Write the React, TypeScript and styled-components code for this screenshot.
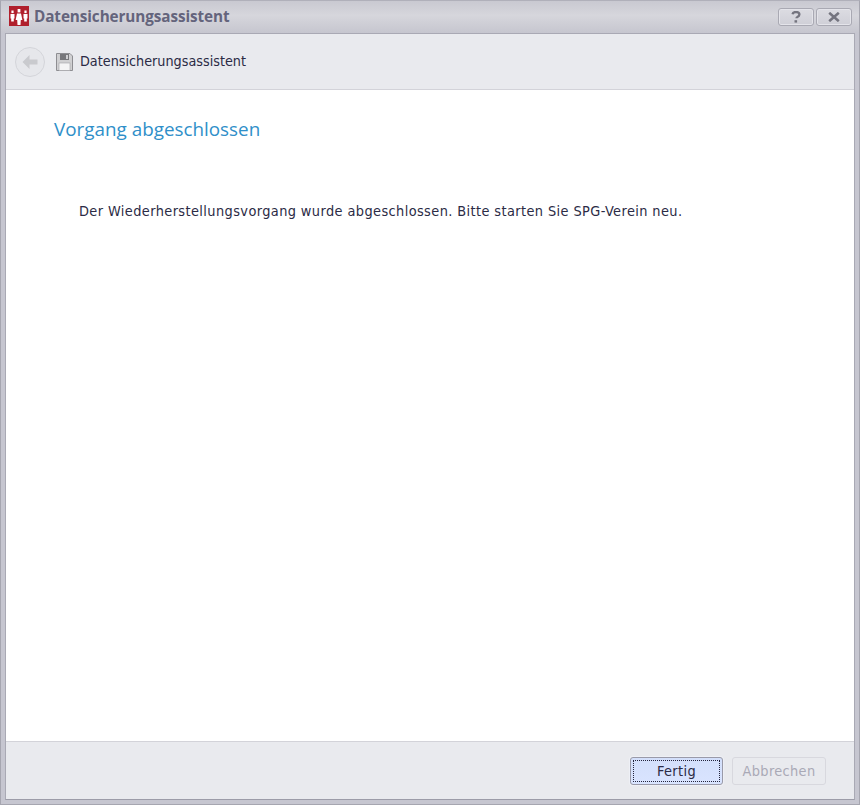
import React from "react";
import styled, { createGlobalStyle } from "styled-components";

const Global = createGlobalStyle`
  html, body { margin: 0; padding: 0; background: #bfbfca; }
  #root { width: 860px; height: 805px; }
  * { box-sizing: border-box; }
`;

const Window = styled.div`
  width: 860px;
  height: 805px;
  display: flex;
  flex-direction: column;
  background: #c6c6d0;
  border: 1px solid #a6a6b0;
  border-top-color: #b0b0ba;
  font-family: "DejaVu Sans", sans-serif;
  font-stretch: condensed;
`;

const TitleBar = styled.div`
  height: 32px;
  flex: none;
  display: flex;
  align-items: center;
  padding: 0 5px 2px 8px;
  background: linear-gradient(#c9c9d1, #d6d6dc 45%, #c6c6cf);
`;

const AppTitle = styled.div`
  margin-left: 5px;
  font-family: "Open Sans", sans-serif;
  font-stretch: normal;
  font-size: 15.3px;
  font-weight: 700;
  color: #64647c;
  letter-spacing: -0.1px;
`;

const TitleButtons = styled.div`
  margin-left: auto;
  display: flex;
  gap: 2px;
  margin-top: 1px;
  margin-right: 2px;
`;

const TitleButton = styled.div`
  width: 36px;
  height: 18px;
  border: 1px solid #a9a9b3;
  border-radius: 3px;
  background: linear-gradient(#dcdce2, #cfcfd7);
  box-shadow: inset 0 0 0 1px #e4e4ea;
  display: flex;
  align-items: center;
  justify-content: center;
`;

const Frame = styled.div`
  flex: 1;
  display: flex;
  flex-direction: column;
  margin: 0 4px 4px 4px;
  border: 1px solid #a9a9b4;
  border-bottom-color: #9c9ca8;
  min-height: 0;
`;

const NavBar = styled.div`
  height: 56px;
  flex: none;
  display: flex;
  align-items: center;
  padding-left: 9px;
  background: #e9eaee;
  border-bottom: 1px solid #d3d3d9;
`;

const BackButton = styled.div`
  width: 30px;
  height: 30px;
  border-radius: 50%;
  border: 1px solid #d4d5da;
  background: #e6e7eb;
  display: flex;
  align-items: center;
  justify-content: center;
`;

const NavTitle = styled.div`
  margin-left: 7px;
  margin-top: -1px;
  font-size: 14.25px;
  color: #2b2b45;
`;

const SaveIcon = styled.svg`
  margin-left: 11px;
  flex: none;
`;

const Content = styled.main`
  flex: 1;
  background: #ffffff;
  padding: 25px 0 0 48px;
  min-height: 0;
`;

const Heading = styled.h1`
  margin: 0;
  font-family: "Open Sans", sans-serif;
  font-stretch: normal;
  font-weight: 400;
  font-size: 18.85px;
  line-height: 28px;
  color: #2f8fc9;
`;

const Message = styled.p`
  margin: 58px 0 0 25px;
  font-size: 14.4px;
  letter-spacing: 0.4px;
  line-height: 20px;
  color: #2b2b45;
`;

const Footer = styled.footer`
  height: 58px;
  flex: none;
  display: flex;
  justify-content: flex-end;
  align-items: flex-start;
  gap: 9px;
  padding: 15px 28px 0 0;
  background: #e9eaee;
  border-top: 1px solid #d3d3d9;
`;

const Action = styled.button<{ $primary?: boolean }>`
  position: relative;
  width: ${(p) => (p.$primary ? 93 : 94)}px;
  height: 28px;
  padding: 0;
  border-radius: 3px;
  font-family: inherit;
  font-stretch: condensed;
  font-size: 14.4px;
  letter-spacing: 0.35px;
  border: 1px solid ${(p) => (p.$primary ? "#9a9aa8" : "#d8d8de")};
  background: ${(p) => (p.$primary ? "linear-gradient(#d3dffb, #d9e4ff)" : "#e9eaee")};
  color: ${(p) => (p.$primary ? "#2b2b45" : "#a9a9b6")};
  box-shadow: ${(p) => (p.$primary ? "0 0 0 1px #eef0f6" : "none")};
`;

const FocusRing = styled.span`
  position: absolute;
  inset: 2px;
  border: 1px dotted #24243c;
  pointer-events: none;
`;

export default function App() {
  return (
    <>
      <Global />
      <Window>
        <TitleBar>
          <svg width="20" height="20" viewBox="0 0 20 20">
            <rect width="20" height="20" fill="#b01f2c" />
            <g fill="#ffffff">
              <rect x="2.4" y="4.5" width="2.2" height="2.6" />
              <path d="M1.5 8h4v4.5h-.7v3H2.2v-3h-.7z" />
              <rect x="15.4" y="4.5" width="2.2" height="2.6" />
              <path d="M14.5 8h4v4.5h-.7v3h-2.6v-3h-.7z" />
              <rect x="8.6" y="3" width="2.8" height="3.4" />
              <path d="M8 7.4h4l1.4 6.6h-1.6l-.3 5h-3l-.3-5H6.6z" />
            </g>
          </svg>
          <AppTitle>Datensicherungsassistent</AppTitle>
          <TitleButtons>
            <TitleButton>
              <svg width="10" height="12" viewBox="0 0 10 12">
                <path d="M1.5 3.2C1.8 1.6 3.2 1 5 1c2 0 3.4 .9 3.4 2.5 0 1.3-.9 1.9-2 2.5-.6.3-.9.7-.9 1.3" fill="none" stroke="#74747f" strokeWidth="2.3" />
                <rect x="3.5" y="9.2" width="2.6" height="2.4" fill="#74747f" />
              </svg>
            </TitleButton>
            <TitleButton>
              <svg width="12" height="10" viewBox="0 0 12 10">
                <path d="M1.2 .8l9.6 8.4M10.8 .8L1.2 9.2" stroke="#74747f" strokeWidth="2.6" fill="none" />
              </svg>
            </TitleButton>
          </TitleButtons>
        </TitleBar>
        <Frame>
          <NavBar>
            <BackButton>
              <svg width="18" height="16" viewBox="0 0 18 16">
                <path d="M8.5 1L1.5 8l7 7V10.5h8v-5h-8z" fill="#c9cace" />
              </svg>
            </BackButton>
            <SaveIcon width="17" height="18" viewBox="0 0 17 18">
              <path d="M.5 .5h13.5l2.5 2.5v14.5H.5z" fill="#d0d0d2" stroke="#8e8e92" />
              <rect x="4" y="1" width="9" height="6" fill="#77777b" />
              <rect x="10" y="2" width="2" height="4" fill="#cfcfd2" />
              <rect x="3" y="10" width="11" height="7.5" fill="#f4f4f5" stroke="#a0a0a5" strokeWidth="0.6" />
            </SaveIcon>
            <NavTitle>Datensicherungsassistent</NavTitle>
          </NavBar>
          <Content>
            <Heading>Vorgang abgeschlossen</Heading>
            <Message>Der Wiederherstellungsvorgang wurde abgeschlossen. Bitte starten Sie SPG-Verein neu.</Message>
          </Content>
          <Footer>
            <Action $primary>
              <FocusRing />
              Fertig
            </Action>
            <Action disabled>Abbrechen</Action>
          </Footer>
        </Frame>
      </Window>
    </>
  );
}
